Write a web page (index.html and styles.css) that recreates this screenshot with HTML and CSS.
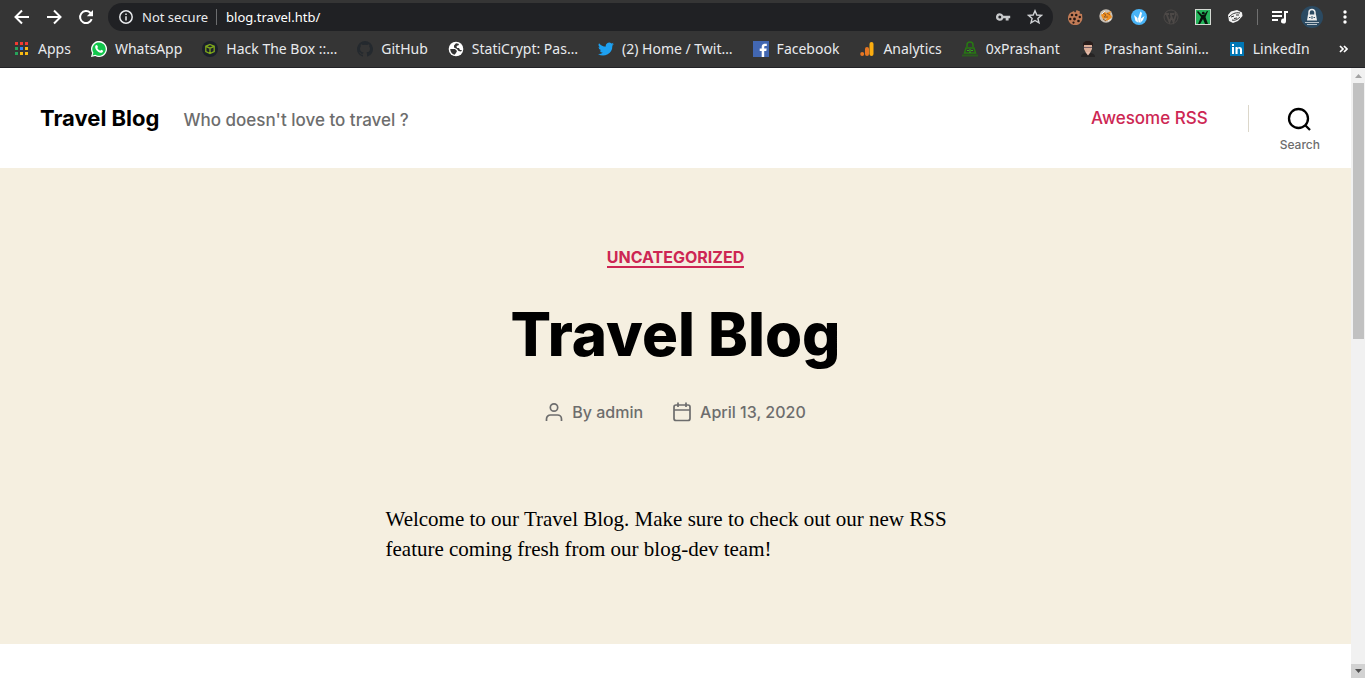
FILE: index.html
```html
<!DOCTYPE html>
<html lang="en">
<head>
<meta charset="utf-8">
<meta name="viewport" content="width=device-width, initial-scale=1">
<title>Travel Blog</title>
<link rel="stylesheet" href="styles.css">
</head>
<body>
<div class="window">
  <div class="toolbar">
    <div class="nav-buttons">
      <button class="icon-button" aria-label="Back"><svg width="16" height="16" viewBox="0 0 16 16" fill="none" stroke="#fff" stroke-width="2"><path d="M15 8H2M8 1.500L1.500 8L8 14.500"/></svg></button>
      <button class="icon-button" aria-label="Forward"><svg width="16" height="16" viewBox="0 0 16 16" fill="none" stroke="#fff" stroke-width="2"><path d="M1 8H14M8 1.500L14.500 8L8 14.500"/></svg></button>
      <button class="icon-button" aria-label="Reload"><svg width="16" height="16" viewBox="0 0 16 16" fill="none" stroke="#fff" stroke-width="2"><path d="M13.700 10.200A6 6 0 1 1 12.300 3.800L13.500 5"/><path d="M15 1V7.200H8.800Z" fill="#fff" stroke="none"/></svg></button>
    </div>
    <div class="address">
      <button class="site-info"><svg width="14" height="14" viewBox="0 0 14 14" fill="none" stroke="#e8eaed" stroke-width="1.500"><circle cx="7" cy="7" r="6.200"/><path d="M7 6.200V10.500M7 3.500V5"/></svg><span>Not secure</span></button>
      <span class="address-divider"></span>
      <input class="url" type="text" value="blog.travel.htb/" aria-label="Address">
      <button class="icon-button" aria-label="Passwords"><svg width="16" height="16" viewBox="0 0 16 16"><path fill="#c8cacc" fill-rule="evenodd" d="M4.800 4.200A3.800 3.800 0 1 0 8.400 9.200H10.700V11.600H13.600V9.200H15.200V6.700H8.400A3.800 3.800 0 0 0 4.800 4.200ZM4.800 6.500A1.500 1.500 0 1 1 4.800 9.500A1.500 1.500 0 1 1 4.800 6.500Z"/></svg></button>
      <button class="icon-button" aria-label="Bookmark"><svg width="16" height="16" viewBox="0 0 16 16" fill="none" stroke="#d0d2d5" stroke-width="1.400"><path d="M8 1.800L9.800 6L14.400 6.400L10.900 9.400L12 13.900L8 11.500L4 13.900L5.100 9.400L1.600 6.400L6.200 6Z"/></svg></button>
    </div>
    <div class="extensions">
      <button class="icon-button" aria-label="Cookies"><svg width="16" height="16" viewBox="0 0 16 16"><path fill="#c17b56" d="M7 2C7.500 4 9 4 9.500 1L13 2.500L12.500 4.500L15 5L15.300 8A7.200 7.200 0 1 1 3 4Z"/><g fill="#241713"><circle cx="5" cy="6" r="1.300"/><circle cx="9.200" cy="6" r="1.300"/><circle cx="12.800" cy="8" r="1.200"/><circle cx="3.300" cy="10" r="1.200"/><circle cx="7.500" cy="10" r="1.400"/><circle cx="11.500" cy="12" r="1.300"/><circle cx="6.500" cy="13.600" r="1.100"/></g></svg></button>
      <button class="icon-button" aria-label="Proxy"><svg width="16" height="16" viewBox="0 0 16 16"><circle cx="7" cy="7" r="6.700" fill="#c9c0b5"/><path fill="#ef9023" d="M2 6L5 3L8 4L12 2L11 5L13 8L10 11L6 12L8 9L4 10Z"/><path d="M4 4L7 6L5 8L9 8M8 4L11 6M4 10L7 12" stroke="#945c2a" fill="none"/><path d="M3 5L6 2M9 12L12 10" stroke="#f3eee7"/></svg></button>
      <button class="icon-button" aria-label="Wappalyzer"><svg width="16" height="16" viewBox="0 0 16 16"><circle cx="8" cy="8" r="8" fill="#49b4f7"/><path fill="#fff" d="M3 6L6.500 9L7 13.500L4.500 12ZM7 9.500L9.500 2.500L11 4L8.800 13.500H7.500ZM10 9.500L13.500 7L12 11L9 14Z"/></svg></button>
      <button class="icon-button" aria-label="WordPress scanner"><svg width="16" height="16" viewBox="0 0 16 16" fill="none" stroke="#4d4947"><circle cx="8" cy="8" r="7"/><path stroke-width="1.800" d="M2 5H6M7 5H11M3.500 5L6.500 13L8.500 8M7.500 5L10.500 13L13 5.500C12 5 12 3.500 13 3.500"/></svg></button>
      <button class="icon-button" aria-label="XPath"><svg width="16" height="16" viewBox="0 0 16 16"><rect width="16" height="16" fill="#d5d9d4"/><rect x="1" y="1" width="14" height="14" fill="#25b45b"/><path fill="#07150c" d="M2 3L3 2L7 6H9L12 2H13L10.500 8L13 15H10L8 10L5 15H3L6 8Z"/><circle cx="8.300" cy="4.200" r="1.400" fill="#07150c"/></svg></button>
      <button class="icon-button" aria-label="Mask"><svg width="16" height="16" viewBox="0 0 16 16"><path fill="#f4f4f4" d="M1 6L4 2.500L10 1L15 3.500L15.500 7L11 12L6 14L2 12Z"/><path fill="none" stroke="#333" d="M2 8C5 5 8 3 13 4M4 8L7 7M9 6L12 6M5 11C8 12 11 10 13 8M7 9.500L10 9"/></svg></button>
    </div>
    <span class="toolbar-divider"></span>
    <button class="icon-button media" aria-label="Media"><svg width="18" height="16" viewBox="0 0 18 16"><path fill="#fff" d="M1 2H11V4H1ZM1 6H11V8H1ZM1 10H7V12H1ZM13 2H17V4H15V12A2.500 2.500 0 1 1 13 9.600Z"/></svg></button>
    <button class="icon-button profile" aria-label="Profile"><svg width="22" height="22" viewBox="0 0 22 22"><circle cx="11" cy="11" r="11" fill="#2b4a62"/><path d="M8 9V6.500A3 3 0 0 1 14 6.500V9" fill="none" stroke="#eee" stroke-width="1.500"/><path fill="#eee" d="M7 8.500H15L16 14.500H6Z"/><path d="M4 16.500H18M6 18.500H16" stroke="#b9c4cc"/><path d="M11 10V13M8 11.500H9.500M12.500 11.500H14" stroke="#2b4a62"/></svg></button>
    <button class="icon-button menu" aria-label="Menu"><svg width="4" height="16" viewBox="0 0 4 16" fill="#fff"><circle cx="2" cy="3" r="1.700"/><circle cx="2" cy="8" r="1.700"/><circle cx="2" cy="13" r="1.700"/></svg></button>
  </div>
  <nav class="bookmarks" aria-label="Bookmarks">
    <a href="#"><svg width="16" height="16" viewBox="0 0 16 16"><path fill="#f13b32" d="M1 1H4V4H1ZM6 1H9V4H6ZM11 1H14V4H11Z"/><path fill="#27a35a" d="M1 6H4V9H1ZM1 11H4V14H1Z"/><path fill="#3284f4" d="M6 6H9V9H6Z"/><path fill="#f9bb12" d="M11 6H14V9H11ZM6 11H9V14H6ZM11 11H14V14H11Z"/></svg>Apps</a>
    <a href="#"><svg width="16" height="16" viewBox="0 0 16 16"><path fill="#fff" d="M0 16L1.100 12A8 8 0 1 1 4.200 15Z"/><path fill="#12c64c" d="M1.600 14.400L2.400 11.800A6.700 6.700 0 1 1 4.300 13.700Z"/><path fill="#fff" d="M4.500 4.500L6 4L7 6L6.300 7C7 8.500 8 9.200 9.300 9.800L10.200 8.800L12.200 9.700C12 11.500 10.500 12.200 8.500 11.400C6 10.400 3.200 7 4.500 4.500Z"/></svg>WhatsApp</a>
    <a href="#"><svg width="16" height="16" viewBox="0 0 16 16"><circle cx="8" cy="8" r="8" fill="#1b202b"/><path d="M8 3.500L12.200 5.300V10.500L8 12.500L3.800 10.500V5.300ZM3.800 5.300L8 7.200L12.200 5.300M8 7.200V12.500" fill="none" stroke="#7fa81b" stroke-width="1.300"/></svg>Hack The Box ::…</a>
    <a href="#"><svg width="16" height="16" viewBox="0 0 16 16"><path fill="#24292e" d="M8 0A8 8 0 0 0 5.500 15.600C5.900 15.700 6 15.400 6 15.200V13.700C3.800 14.200 3.300 12.800 3.300 12.800C2.900 11.900 2.400 11.600 2.400 11.600C1.700 11.100 2.500 11.100 2.500 11.100C3.300 11.200 3.700 11.900 3.700 11.900C4.400 13.200 5.600 12.800 6.100 12.600C6.100 12.100 6.300 11.700 6.600 11.500C4.800 11.300 3 10.600 3 7.600C3 6.700 3.300 6 3.800 5.400C3.700 5.200 3.400 4.400 3.900 3.300C3.900 3.300 4.500 3.100 6 4.100A7.500 7.500 0 0 1 10 4.100C11.500 3.100 12.100 3.300 12.100 3.300C12.600 4.400 12.300 5.200 12.200 5.400C12.700 6 13 6.700 13 7.600C13 10.700 11.200 11.300 9.400 11.500C9.700 11.700 10 12.200 10 13V15.200C10 15.400 10.100 15.700 10.500 15.600A8 8 0 0 0 8 0Z"/></svg>GitHub</a>
    <a href="#"><svg width="16" height="16" viewBox="0 0 16 16"><circle cx="8" cy="8" r="7.300" fill="#fff"/><path fill="#353535" d="M2.200 8H7L9 10L8 12L6.500 13.700C4 13 2.300 11 2.200 8ZM8 2.200L10.500 2.700L11 4L8.500 5L9 7H11L12 9H14L13 10.500L10.500 10L9 8L6 6.500V4.500Z"/></svg>StatiCrypt: Pas…</a>
    <a href="#"><svg width="16" height="16" viewBox="0 0 24 24"><path fill="#1da1f2" d="M23.900 4.600A10 10 0 0 1 21.100 5.400A5 5 0 0 0 23.300 2.700A10 10 0 0 1 20.200 3.900A4.900 4.900 0 0 0 11.800 8.400A14 14 0 0 1 1.600 3.200A4.900 4.900 0 0 0 3.100 9.700A5 5 0 0 1 .900 9.100A4.900 4.900 0 0 0 4.800 14A5 5 0 0 1 2.600 14.100A4.900 4.900 0 0 0 7.200 17.500A10 10 0 0 1 0 19.500A14 14 0 0 0 21.500 7A10 10 0 0 0 23.900 4.600Z"/></svg>(2) Home / Twit…</a>
    <a href="#"><svg width="16" height="16" viewBox="0 0 16 16"><path fill="#4267b2" d="M0 0H16V16H0Z"/><path fill="#fff" d="M8.700 16V10H6.700V7.600H8.700V5.900C8.700 3.900 10 2.700 12 2.700H13.800V5H12.500C11.500 5 11.200 5.500 11.200 6.200V7.600H13.700L13.300 10H11.200V16Z"/></svg>Facebook</a>
    <a href="#"><svg width="16" height="16" viewBox="0 0 16 16"><rect x="10.500" y="1" width="4" height="14" rx="2" fill="#fbad10"/><rect x="6" y="6" width="4" height="9" rx="2" fill="#e87622"/><circle cx="3.200" cy="13" r="2" fill="#e87622"/></svg>Analytics</a>
    <a href="#"><svg width="16" height="16" viewBox="0 0 16 16"><path d="M5 6V4A3 3 0 0 1 11 4V6M4 7H12L13.500 12H2.500Z" fill="none" stroke="#277a12" stroke-width="1.500"/><path d="M0 14.500H16" stroke="#2a5c1e" stroke-width="2"/><path d="M8 8V12M5 9.500H7M9 9.500H11" stroke="#35a51c"/></svg>0xPrashant</a>
    <a href="#"><svg width="16" height="16" viewBox="0 0 16 16"><path fill="#262424" d="M1 16C1 13 4 12 6 12H10C12 12 15 13 15 16Z"/><path fill="#dcae98" d="M4 3H12V8L10 12L8 14L6 12L4 8Z"/><path fill="#281c1a" d="M3 5V2L6 0H10L13 2V5H12V4H4V5Z"/><path d="M4 6.500H12" stroke="#745e65"/><path fill="#e4bba9" d="M6 11L8 14.500L10 11Z"/></svg>Prashant Saini…</a>
    <a href="#"><svg width="16" height="16" viewBox="0 0 16 16"><rect x="1" y="1" width="14" height="14" fill="#0077b5"/><path fill="#fff" d="M3 6H5V13H3ZM3 3H5V5H3ZM6.500 6H8.500V7C9.600 5.300 13 5.500 13 8.500V13H11V9C11 7 8.600 7 8.600 9V13H6.500Z"/></svg>LinkedIn</a>
    <button class="icon-button overflow" aria-label="More bookmarks"><svg width="9" height="8" viewBox="0 0 9 8" fill="none" stroke="#fff" stroke-width="1.700"><path d="M1 1L4 4L1 7M5 1L8 4L5 7"/></svg></button>
  </nav>
  <div class="viewport">
    <div class="page">
      <header class="site-header">
        <div class="branding"><a class="site-title" href="#">Travel Blog</a><span class="tagline">Who doesn't love to travel ?</span></div>
        <nav class="site-nav"><a href="#">Awesome RSS</a></nav>
        <button class="search"><svg width="25" height="25" viewBox="0 0 25 25" fill="none" stroke="#000" stroke-width="2.300"><circle cx="11.500" cy="11.500" r="9.500"/><path d="M18 18L23 23"/></svg><span>Search</span></button>
      </header>
      <main class="post">
        <a class="category" href="#">UNCATEGORIZED</a>
        <h1>Travel Blog</h1>
        <div class="meta">
          <span><svg width="18" height="20" viewBox="0 0 18 20" fill="none" stroke="#6d6d6d" stroke-width="1.700"><circle cx="9" cy="5.500" r="3.700"/><path d="M1.500 19V17A4 4 0 0 1 5.500 13H12.500A4 4 0 0 1 16.500 17V19"/></svg>By <a href="#">admin</a></span>
          <span><svg width="18" height="20" viewBox="0 0 18 20" fill="none" stroke="#6d6d6d" stroke-width="1.700"><rect x="1" y="3" width="16" height="15.500" rx="2"/><path d="M1 8H17M5 .500V5M13 .500V5"/></svg><a href="#">April 13, 2020</a></span>
        </div>
        <p class="entry">Welcome to our Travel Blog. Make sure to check out our new RSS feature coming fresh from our blog-dev team!</p>
      </main>
    </div>
    <div class="scrollbar" aria-hidden="true">
      <svg class="arrow" width="14" height="14" viewBox="0 0 14 14"><path fill="#a3a3a3" d="M4 10L7.500 6L11 10Z"/></svg>
      <div class="track"><div class="thumb"></div></div>
      <svg class="arrow down" width="14" height="14" viewBox="0 0 14 14"><path fill="#505050" d="M4 5H11L7.500 9Z"/></svg>
    </div>
  </div>
</div>
</body>
</html>
```

FILE: styles.css
```css
* { box-sizing: border-box; }
body { margin: 0; font-family: Inter, "Liberation Sans", sans-serif; background: #fff; }
a { color: inherit; text-decoration: none; }
button { border: 0; padding: 0; background: none; font: inherit; color: inherit; cursor: pointer; }
svg { display: block; flex: none; }

.window { display: flex; flex-direction: column; min-height: 100vh; }

.toolbar { display: flex; align-items: center; height: 34px; padding: 0 18px 0 14px; background: #353535; font-family: "Noto Sans", sans-serif; }
.icon-button { display: grid; place-items: center; flex: none; }
.nav-buttons { display: flex; gap: 16px; margin-right: 14px; }
.address { display: flex; align-items: center; flex: 1; min-width: 0; height: 28px; padding: 0 10px 0 11px; border-radius: 14px; background: #202124; color: #e8eaed; font-size: 13px; }
.site-info { display: flex; align-items: center; gap: 9px; white-space: nowrap; }
.address-divider { width: 1px; height: 16px; margin: 0 9px 0 8px; background: #6c6d6f; }
.url { flex: 1; min-width: 0; padding: 0; border: 0; outline: 0; background: none; color: #fff; font: inherit; }
.address .icon-button + .icon-button { margin-left: 16px; }
.extensions { display: flex; gap: 16px; margin-left: 14px; }
.toolbar-divider { width: 1px; height: 16px; margin: 0 13px 0 14px; background: #707070; }
.profile { margin: 0 20px 0 12px; }

.bookmarks { display: flex; align-items: center; gap: 20px; height: 34px; padding: 0 17px 4px 14px; border-bottom: 1px solid #222226; background: #353535; color: #e8eaed; font: 14px/20px "Noto Sans", sans-serif; white-space: nowrap; }
.bookmarks a { display: flex; align-items: center; gap: 8px; }
.overflow { margin-left: auto; }

.viewport { display: flex; flex: 1; }
.page { flex: 1; min-width: 0; }
.site-header { display: flex; align-items: center; min-height: 100px; padding: 0 31px 0 40px; }
.branding { display: flex; align-items: baseline; flex: 1; gap: 24px; }
.site-title { font-size: 22px; font-weight: 700; color: #000; }
.tagline { font-size: 17px; font-weight: 500; color: #6d6d6d; }
.site-nav { padding-right: 40px; border-right: 1px solid #dcd7ca; font-size: 17px; font-weight: 500; line-height: 27px; color: #cd2653; }
.search { display: flex; flex-direction: column; align-items: center; gap: 5px; margin-left: 31px; padding-top: 24px; color: #6d6d6d; font-size: 12px; font-weight: 500; line-height: 16px; }

.post { display: flex; flex-direction: column; align-items: center; padding: 80px 40px; background: #f5efe0; }
.category { border-bottom: 2px solid #cd2653; color: #cd2653; font-size: 16px; font-weight: 700; line-height: 18px; }
h1 { margin: 34px 0; font-size: 60px; font-weight: 800; line-height: 64px; color: #000; }
.meta { display: flex; gap: 30px; color: #6d6d6d; font-size: 16px; font-weight: 500; line-height: 24px; }
.meta > span { display: flex; align-items: center; white-space: pre; }
.meta svg { margin-right: 9px; }
.entry { width: 100%; max-width: 580px; margin: 80px 0 0; color: #000; font: 21px/30px "Liberation Serif", serif; }

.scrollbar { display: flex; flex-direction: column; width: 14px; background: #f1f1f1; }
.track { flex: 1; }
.thumb { height: 44%; margin: 1px 1px 0 2px; background: #c1c1c1; }
.down { background: #d2d2d2; }
```
